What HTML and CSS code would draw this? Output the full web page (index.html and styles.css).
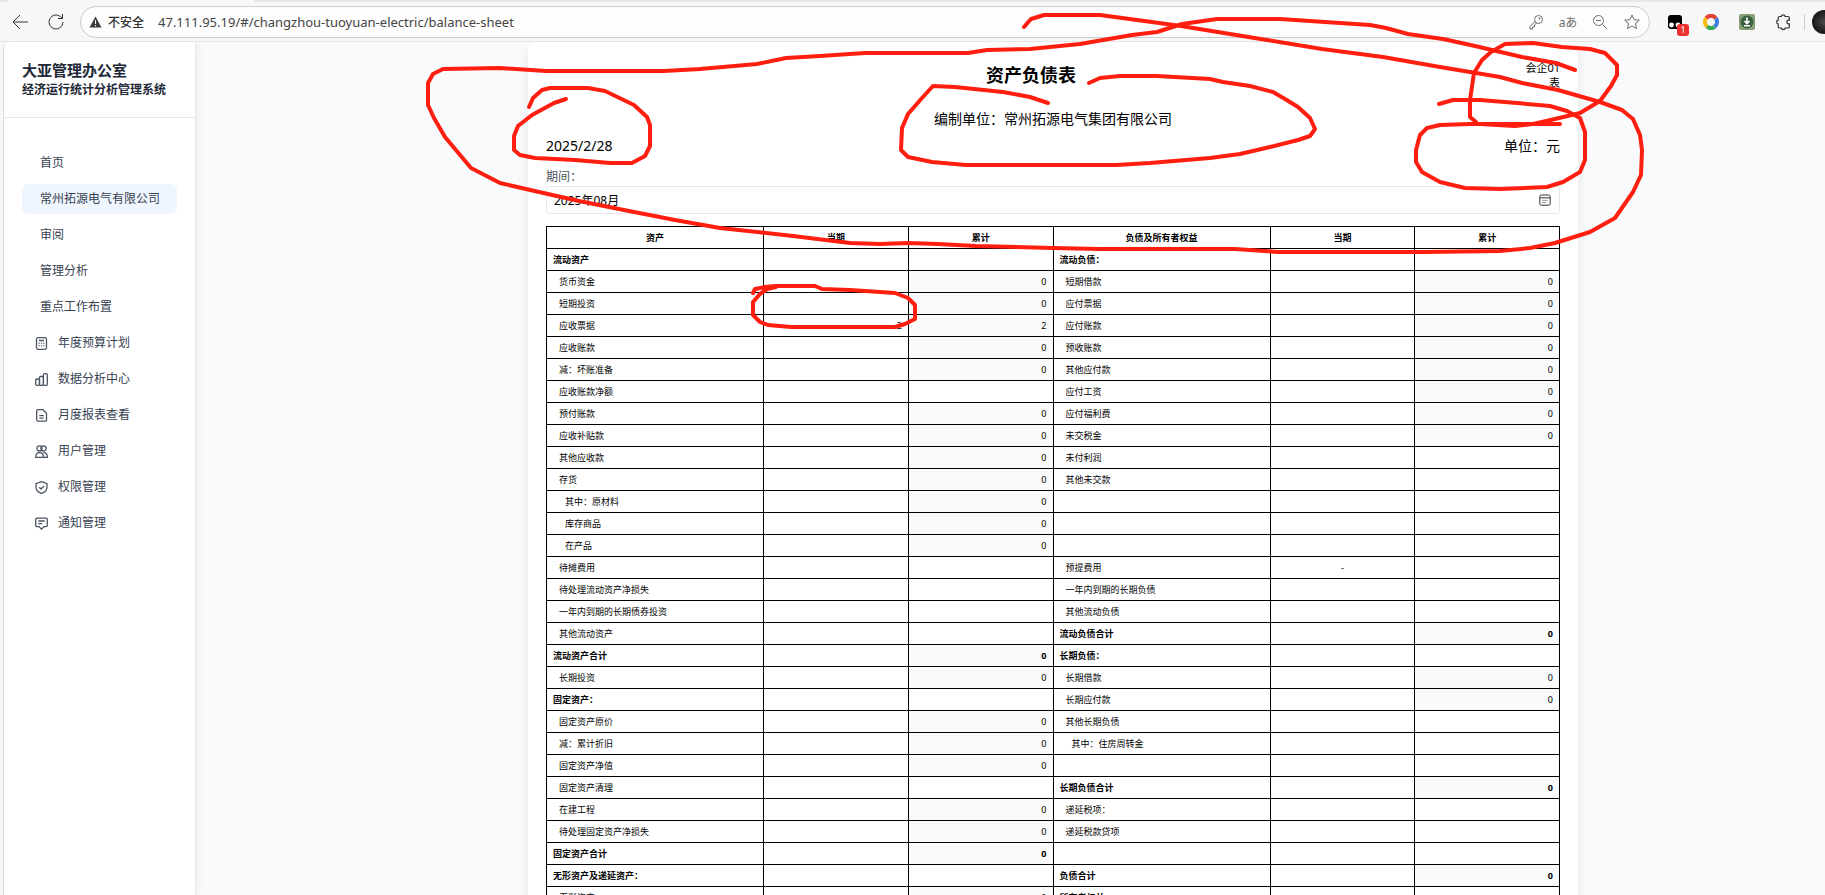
FILE: index.html
```
<!DOCTYPE html>
<html lang="zh-CN">
<head>
<meta charset="utf-8">
<title>资产负债表</title>
<link rel="stylesheet" href="styles.css">
</head>
<body>
<div class="window">
<header class="browser">
  <div class="tabstrip"><span class="tab"></span></div>
  <div class="toolbar">
    <button class="tool" type="button" aria-label="返回"><svg width="18" height="18" viewBox="0 0 18 18"><path d="M17 9H2M9 2L2 9l7 7"/></svg></button>
    <button class="tool reload" type="button" aria-label="刷新"><svg width="18" height="18" viewBox="0 0 18 18"><path d="M16 9a7 7 0 1 1-2.500-5.400L15.500 5.500M15.500 1v4.500H11"/></svg></button>
    <div class="address">
      <svg class="warn" width="13" height="12" viewBox="0 0 13 12"><path d="M6.500 .5L12.500 11.500H.5z"/><path class="mark" d="M6.500 4v4M6.500 9v1.300"/></svg>
      <label class="unsafe" for="url">不安全</label>
      <input id="url" class="url" type="text" value="47.111.95.19/#/changzhou-tuoyuan-electric/balance-sheet">
      <button class="tool mini" type="button" aria-label="密码"><svg width="16" height="16" viewBox="0 0 16 16"><circle cx="10.500" cy="5.500" r="4"/><circle cx="11.500" cy="4.500" r=".6"/><path d="M7 7.500L2 12.500V15h2.500v-2h2v-2l2-2"/></svg></button>
      <button class="tool mini translate" type="button" aria-label="翻译">aあ</button>
      <button class="tool mini" type="button" aria-label="缩放"><svg width="16" height="16" viewBox="0 0 16 16"><circle cx="6.500" cy="6.500" r="5"/><path d="M4 6.500h5M10.500 10.500l4.500 4.500"/></svg></button>
      <button class="tool mini" type="button" aria-label="收藏"><svg width="16" height="16" viewBox="0 0 16 16"><path d="M8 1l2.100 4.700 5.200.5-3.900 3.400 1.200 5L8 12l-4.600 2.600 1.200-5L.7 6.200l5.200-.5z"/></svg></button>
    </div>
    <div class="extensions">
      <button class="tool ext" type="button" aria-label="脚本"><svg width="16" height="16" viewBox="0 0 16 16"><rect x="1" y="1" width="14" height="14" rx="3" fill="#000" stroke="none"/><circle cx="4.500" cy="11" r="2.400" fill="#fff" stroke="none"/><circle cx="11" cy="11" r="2.400" fill="#fff" stroke="none"/></svg><span class="badge">1</span></button>
      <button class="tool ext" type="button" aria-label="浏览器"><svg width="16" height="16" viewBox="0 0 16 16" class="ring"><path stroke="#e34234" d="M3.200 4.200A6 6 0 0 1 12.800 4.200"/><path stroke="#3f7de0" d="M12.800 4.200A6 6 0 0 1 11.500 12.800"/><path stroke="#35a853" d="M11.500 12.800A6 6 0 0 1 4 12.500"/><path stroke="#f5b912" d="M4 12.500A6 6 0 0 1 3.200 4.200"/></svg></button>
      <button class="tool ext" type="button" aria-label="下载"><svg width="16" height="16" viewBox="0 0 16 16"><rect width="16" height="16" rx="2" fill="#86a07a" stroke="none"/><circle cx="8" cy="8" r="6.500" fill="#3c6145" stroke="none"/><path d="M8 3.500v5M5.500 7L8 9.500 10.500 7M5 11.800h6" stroke="#fff" stroke-width="1.600"/></svg></button>
      <button class="tool ext" type="button" aria-label="扩展"><svg width="16" height="16" viewBox="0 0 16 16"><path stroke-width="1.200" d="M4.500 2.500h1.800a2 2 0 0 1 3.900 0H13a1.300 1.300 0 0 1 1.300 1.300v2.400h-1a1.900 1.900 0 0 0 0 3.700h1v2.800A1.300 1.300 0 0 1 13 14h-2.800a2 2 0 0 1-3.900 0H4.500a1.300 1.300 0 0 1-1.300-1.300V10a2 2 0 0 1 0-3.900V3.800a1.300 1.300 0 0 1 1.300-1.300z"/></svg></button>
      <span class="separator"></span>
      <button class="avatar" type="button" aria-label="账户"></button>
    </div>
  </div>
</header>

<div class="app">
<aside class="sidebar">
  <div class="brand"><h1 class="brand-name">大亚管理办公室</h1><p class="brand-sub">经济运行统计分析管理系统</p></div>
  <nav class="menu">
    <a class="item" href="#">首页</a>
    <a class="item active" href="#">常州拓源电气有限公司</a>
    <a class="item" href="#">审阅</a>
    <a class="item" href="#">管理分析</a>
    <a class="item" href="#">重点工作布置</a>
    <a class="item with-icon" href="#"><svg width="13" height="13" viewBox="0 0 13 13"><rect x="1.500" y=".7" width="10" height="11.600" rx="1.500"/><path d="M4 3.500h5M4.200 5.800v1M6.500 5.800v1M8.800 5.800v1M4.200 8.300v1M6.500 8.300v1M8.800 8.300v1"/></svg>年度预算计划</a>
    <a class="item with-icon" href="#"><svg width="13" height="13" viewBox="0 0 13 13"><rect x=".7" y="6" width="3.800" height="6.300" rx="1"/><rect x="4.500" y="3.500" width="3.900" height="8.800" rx="1"/><rect x="8.400" y=".7" width="3.900" height="11.600" rx="1"/></svg>数据分析中心</a>
    <a class="item with-icon" href="#"><svg width="13" height="13" viewBox="0 0 13 13"><path d="M3 .7h5l3.500 3.500v7a1 1 0 0 1-1 1H3a1.300 1.300 0 0 1-1.300-1.200V2A1.300 1.300 0 0 1 3 .7zM4.300 6.700h4.500M4.300 9.200h4.500"/></svg>月度报表查看</a>
    <a class="item with-icon" href="#"><svg width="13" height="13" viewBox="0 0 13 13"><circle cx="4.500" cy="3.400" r="2.600"/><circle cx="8.500" cy="3.400" r="2.600"/><path d="M.7 12.300c0-3 1.300-4.600 3.800-4.600s4 1.600 4 4.600zM8.500 7.700c2.500 0 3.800 1.600 3.800 4.600H8.500"/></svg>用户管理</a>
    <a class="item with-icon" href="#"><svg width="13" height="13" viewBox="0 0 13 13"><path d="M6.500.7L12 2.600V6c0 3.200-2 5.300-5.500 6.500C3 11.300 1 9.200 1 6V2.600zM4.300 6.300l1.700 1.700 3-3"/></svg>权限管理</a>
    <a class="item with-icon" href="#"><svg width="13" height="13" viewBox="0 0 13 13"><path d="M2 1.200h9a1.300 1.300 0 0 1 1.300 1.300v5.800A1.300 1.300 0 0 1 11 9.600H9l-2.500 2.600L4 9.600H2A1.300 1.300 0 0 1 .7 8.300V2.500A1.300 1.300 0 0 1 2 1.200zM3.300 4h6.400M3.300 6.600h4"/></svg>通知管理</a>
  </nav>
</aside>

<main class="content">
<section class="paper">
  <div class="sheet-head"><h2 class="sheet-title">资产负债表</h2><span class="form-no">会企01表</span></div>
  <p class="company">编制单位：常州拓源电气集团有限公司</p>
  <div class="meta"><span>2025/2/28</span><span>单位：元</span></div>
  <label class="period-label" for="period">期间：</label>
  <div class="period"><input id="period" type="text" value="2025年08月"><svg width="12" height="12" viewBox="0 0 12 12"><rect x=".8" y="1" width="10.400" height="10.200" rx="1.500"/><path d="M1 3.800h10M3.500 6.300h1M5.500 6.300h1M7.500 6.300h1M3.500 8.500h1M5.500 8.500h1"/></svg></div>
  <table class="sheet">
    <colgroup><col class="name"><col class="num"><col class="num"><col class="name"><col class="num"><col class="num"></colgroup>
    <thead><tr><th>资产</th><th>当期</th><th>累计</th><th>负债及所有者权益</th><th>当期</th><th>累计</th></tr></thead>
    <tbody>
    <tr><td class="b">流动资产</td><td></td><td></td><td class="b">流动负债：</td><td></td><td></td></tr>
    <tr><td class="i1">货币资金</td><td></td><td class="sum">0</td><td class="i1">短期借款</td><td></td><td class="sum">0</td></tr>
    <tr><td class="i1">短期投资</td><td></td><td class="sum">0</td><td class="i1">应付票据</td><td></td><td class="sum">0</td></tr>
    <tr><td class="i1">应收票据</td><td class="val">2</td><td class="sum">2</td><td class="i1">应付账款</td><td></td><td class="sum">0</td></tr>
    <tr><td class="i1">应收账款</td><td></td><td class="sum">0</td><td class="i1">预收账款</td><td></td><td class="sum">0</td></tr>
    <tr><td class="i1">减：坏账准备</td><td></td><td class="sum">0</td><td class="i1">其他应付款</td><td></td><td class="sum">0</td></tr>
    <tr><td class="i1">应收账款净额</td><td></td><td></td><td class="i1">应付工资</td><td></td><td class="sum">0</td></tr>
    <tr><td class="i1">预付账款</td><td></td><td class="sum">0</td><td class="i1">应付福利费</td><td></td><td class="sum">0</td></tr>
    <tr><td class="i1">应收补贴款</td><td></td><td class="sum">0</td><td class="i1">未交税金</td><td></td><td class="sum">0</td></tr>
    <tr><td class="i1">其他应收款</td><td></td><td class="sum">0</td><td class="i1">未付利润</td><td></td><td></td></tr>
    <tr><td class="i1">存货</td><td></td><td class="sum">0</td><td class="i1">其他未交款</td><td></td><td></td></tr>
    <tr><td class="i2">其中：原材料</td><td></td><td class="sum">0</td><td></td><td></td><td></td></tr>
    <tr><td class="i2">库存商品</td><td></td><td class="sum">0</td><td></td><td></td><td></td></tr>
    <tr><td class="i2">在产品</td><td></td><td class="sum">0</td><td></td><td></td><td></td></tr>
    <tr><td class="i1">待摊费用</td><td></td><td></td><td class="i1">预提费用</td><td class="dash">-</td><td></td></tr>
    <tr><td class="i1">待处理流动资产净损失</td><td></td><td></td><td class="i1">一年内到期的长期负债</td><td></td><td></td></tr>
    <tr><td class="i1">一年内到期的长期债券投资</td><td></td><td></td><td class="i1">其他流动负债</td><td></td><td></td></tr>
    <tr><td class="i1">其他流动资产</td><td></td><td></td><td class="b">流动负债合计</td><td></td><td class="sum b">0</td></tr>
    <tr><td class="b">流动资产合计</td><td></td><td class="sum b">0</td><td class="b">长期负债：</td><td></td><td></td></tr>
    <tr><td class="i1">长期投资</td><td></td><td class="sum">0</td><td class="i1">长期借款</td><td></td><td class="sum">0</td></tr>
    <tr><td class="b">固定资产：</td><td></td><td></td><td class="i1">长期应付款</td><td></td><td class="sum">0</td></tr>
    <tr><td class="i1">固定资产原价</td><td></td><td class="sum">0</td><td class="i1">其他长期负债</td><td></td><td></td></tr>
    <tr><td class="i1">减：累计折旧</td><td></td><td class="sum">0</td><td class="i2">其中：住房周转金</td><td></td><td></td></tr>
    <tr><td class="i1">固定资产净值</td><td></td><td class="sum">0</td><td></td><td></td><td></td></tr>
    <tr><td class="i1">固定资产清理</td><td></td><td></td><td class="b">长期负债合计</td><td></td><td class="sum b">0</td></tr>
    <tr><td class="i1">在建工程</td><td></td><td class="sum">0</td><td class="i1">递延税项：</td><td></td><td></td></tr>
    <tr><td class="i1">待处理固定资产净损失</td><td></td><td class="sum">0</td><td class="i1">递延税款贷项</td><td></td><td></td></tr>
    <tr><td class="b">固定资产合计</td><td></td><td class="sum b">0</td><td></td><td></td><td></td></tr>
    <tr><td class="b">无形资产及递延资产：</td><td></td><td></td><td class="b">负债合计</td><td></td><td class="sum b">0</td></tr>
    <tr><td class="i1">无形资产</td><td></td><td class="sum">0</td><td class="b">所有者权益：</td><td></td><td></td></tr>
    </tbody>
  </table>
</section>
</main>
</div>

<svg class="marks" viewBox="0 0 1825 895" aria-hidden="true">
  <path d="M1024 27L1031 19 1044 15H1100L1137 20 1181 26 1230 34 1267 40 1322 49 1383 57 1440 67 1500 77 1522 83 1558 90 1600 102 1622 110 1633 119 1640 135 1642 150 1641 175 1633 192 1615 218 1590 232 1555 243 1530 248 1500 251 1425 252H1278L1235 249 1100 249 1053 248 976 246 938 244 908 243 880 244 850 243 793 236 720 228 675 220 629 211 579 201 539 192 500 183 471 168 445 137 434 118 428 105V83L433 74 443 69 500 68 546 71H664L700 69 757 64 786 58 820 56 865 53H968L987 50 1030 49 1080 44 1132 35 1157 32 1182 24 1217 19H1280L1370 25 1386 28 1408 34 1443 39 1475 46 1522 57 1556 63 1575 70"/>
  <path d="M1560 124H1470L1440 125 1427 128 1420 135 1416 150V162L1422 172 1440 182 1465 188 1500 189 1547 187 1563 182 1580 172 1585 160V132L1580 118 1567 111 1550 106 1517 103 1480 100H1453L1439 104"/>
  <path d="M1476 122L1470 117V100L1474 73 1482 60 1491 52 1505 44 1533 43 1562 47 1590 49 1605 53 1617 65V75L1611 86 1600 101 1580 113 1555 119 1533 124 1515 126 1480 124"/>
  <path d="M1048 103L1030 97 1003 92 955 87 933 86 922 98 908 114 902 128 901 150 908 157 932 162 966 165H1116L1150 163 1210 158 1240 154 1270 147 1298 140 1310 136 1315 129 1310 118 1298 107 1285 99 1273 92 1250 86 1223 82 1210 79 1157 76H1120L1100 78 1089 83"/>
  <path d="M566 99L554 103 532 115 518 126 514 136V150L520 155 535 158 575 160 610 163H632L645 156 650 146V125L647 117 634 105 605 91 588 88H550L542 90 533 98 529 107"/>
  <path d="M753 293L755 289 765 287 775 286H815L822 289 850 290 895 293 908 298 915 305V319L905 324 895 327H791L768 325 760 322 753 315V302L760 294 767 289 776 287"/>
</svg>
</div>
</body>
</html>
```
FILE: styles.css
```
* { box-sizing: border-box; }
body {
  margin: 0;
  font-family: "Noto Sans", "Noto Sans CJK SC", sans-serif;
  font-size: 12px;
  color: #000;
}
h1, h2, p { margin: 0; }
button { padding: 0; border: 0; background: none; font: inherit; }
input { border: 0; padding: 0; background: none; font: inherit; color: inherit; outline: 0; min-width: 0; }
svg { flex: none; fill: none; stroke: currentColor; }

.window { position: relative; display: flex; flex-direction: column; height: 100vh; overflow: hidden; background: #f7f7f7; }

.browser { flex: none; border-bottom: 1px solid #e6e6e6; }
.tabstrip { display: flex; height: 2px; padding-left: 8px; background: #e8e8e8; }
.tab { width: 246px; background: #f7f7f7; }
.toolbar { display: flex; align-items: center; height: 39px; padding-left: 10px; }
.tool { display: flex; align-items: center; justify-content: center; width: 20px; height: 20px; color: #333; position: relative; }
.reload { margin: 0 14px 0 16px; }
.address {
  flex: 1; display: flex; align-items: center; height: 32px;
  padding: 0 7px 0 8px; border: 1px solid #ccc; border-radius: 16px; background: #fdfdfd;
}
.warn { fill: #3c3c3c; stroke: none; }
.warn .mark { stroke: #fff; }
.unsafe { margin: 0 14px 0 6px; color: #333; font-weight: 500; }
.url { flex: 1; font-size: 13px; line-height: 20px; color: #444; }
.mini { margin-left: 12px; color: #6d6d6d; }
.translate { font-size: 12px; white-space: nowrap; }
.extensions { flex: none; display: flex; align-items: center; gap: 16px; width: 175px; padding-left: 15px; overflow: hidden; height: 39px; }
.ext { flex: none; }
.ring { stroke-width: 4; }
.badge {
  position: absolute; left: 12px; top: 12px; width: 12px; height: 12px;
  border-radius: 3px; background: #ee3030; color: #fff; font-size: 9px; line-height: 12px;
}
.separator { flex: none; width: 1px; height: 16px; margin-left: -5px; background: #ccc; }
.avatar { flex: none; width: 24px; height: 24px; margin-left: -9px; border-radius: 50%; background: radial-gradient(#4a4a4c, #1c1c1e 60%); }

.app { flex: 1; min-height: 0; display: flex; margin-left: 3px; border-left: 1px solid #e0e0e0; border-top-left-radius: 6px; overflow: hidden; background: #f8fafc; }
.sidebar { flex: none; width: 192px; background: #fff; border-right: 1px solid #e5e7eb; box-shadow: 0 0 9px rgba(0, 0, 0, .08); }
.brand { height: 76px; padding: 17px 18px 0; border-bottom: 1px solid #e5e7eb; color: #1f2937; font-weight: 700; }
.brand-name { font-size: 15px; line-height: 22px; }
.brand-sub { font-size: 12px; line-height: 18px; }
.menu { display: flex; flex-direction: column; gap: 6px; padding: 30px 18px; }
.item { display: flex; align-items: center; height: 30px; padding-left: 18px; border-radius: 6px; color: #374151; line-height: 18px; text-decoration: none; }
.item.active { background: #eff6ff; }
.item.with-icon { padding-left: 13px; gap: 10px; }
.item svg { stroke: #4b5563; stroke-width: 1.3; }

.content { flex: 1; min-width: 0; display: flex; justify-content: center; padding: 0 24px 0 109px; }
.paper {
  flex: 0 1 1050px; align-self: flex-start; display: flex; flex-direction: column;
  padding: 18px 18px 24px; border-radius: 6px; background: #fff; box-shadow: 0 4px 12px rgba(0, 0, 0, .08);
}
.sheet-head { display: flex; }
.sheet-title { flex: 1; text-align: center; font-size: 18px; line-height: 30px; font-weight: 700; }
.form-no { width: 44px; font-size: 11px; line-height: 15px; text-align: right; }
.company { margin-top: 19px; text-align: center; font-size: 14px; line-height: 20px; }
.meta { display: flex; justify-content: space-between; margin-top: 7px; font-size: 14px; line-height: 20px; }
.period-label { margin-top: 12px; color: #4b5563; line-height: 18px; }
.period { display: flex; align-items: center; height: 28px; padding: 0 8px 0 7px; border: 1px solid #e5e7eb; border-radius: 3px; }
.period input { flex: 1; }
.period svg { stroke: #333; }

.sheet { width: 100%; margin-top: 12px; border-collapse: collapse; table-layout: fixed; font-size: 9px; line-height: 13px; }
.sheet .name { width: 21.43%; }
.sheet .num { width: 14.28%; }
.sheet th, .sheet td { height: 22px; padding: 4px 6px; border: 1px solid #000; }
.sheet th { font-weight: 700; text-align: center; }
.sheet .b { font-weight: 700; }
.sheet .i1 { padding-left: 12px; }
.sheet .i2 { padding-left: 18px; }
.sheet .sum { background: #f8fafc; text-align: right; }
.sheet .val { text-align: right; }
.sheet .dash { text-align: center; }

.marks { position: absolute; left: 0; top: 0; width: 1825px; height: 895px; stroke: #ff1e10; stroke-width: 4; stroke-linejoin: round; stroke-linecap: round; pointer-events: none; }
```
